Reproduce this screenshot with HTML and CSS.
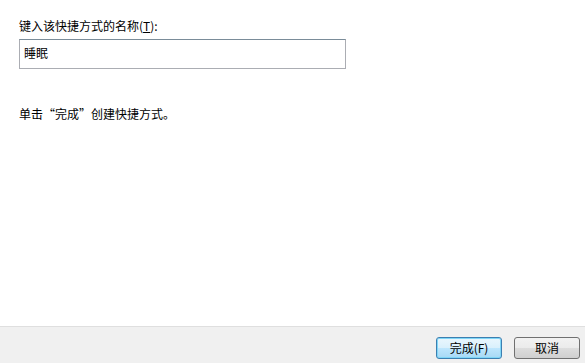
FILE: index.html
```html
<!DOCTYPE html>
<html lang="zh-CN">
  <head>
    <meta charset="UTF-8" />
    <title>创建快捷方式</title>
    <link rel="stylesheet" href="styles.css">
  </head>
  <body>
    <div class="wizard">
      <div class="wizard__body">
        <label class="wizard__label" for="name">键入该快捷方式的名称(<u>T</u>):</label>
        <input id="name" class="wizard__input" type="text" value="睡眠" />
        <p class="wizard__hint">单击“完成”创建快捷方式。</p>
      </div>
      <div class="wizard__footer">
        <button class="wizard__button wizard__button--default">完成(F)</button>
        <button class="wizard__button">取消</button>
      </div>
    </div>
  </body>
</html>
```

FILE: styles.css
```css
* {
  padding: 0;
  margin: 0;
  box-sizing: border-box;
}

body {
  background-color: #ffffff;
  font-family: "Noto Sans CJK SC", "Liberation Sans", sans-serif;
  font-size: 12px;
  color: #000000;
}

.wizard {
  width: 585px;
  height: 363px;
  display: flex;
  flex-direction: column;
}

.wizard__body {
  flex: 1;
  display: flex;
  flex-direction: column;
  align-items: flex-start;
  padding: 18px 0 0 19px;
}

.wizard__label {
  line-height: 16px;
  height: 16px;
}

.wizard__input {
  margin-top: 5px;
  width: 327px;
  height: 30px;
  border: 1px solid #abadb3;
  border-top-color: #7a8c99;
  padding: 0 4px 4px;
  font-family: inherit;
  font-size: 12px;
  color: #000000;
  outline: none;
}

.wizard__hint {
  margin-top: 37px;
  line-height: 16px;
}

.wizard__footer {
  height: 37px;
  background-color: #f0f0f0;
  border-top: 1px solid #dfdfdf;
  display: flex;
  justify-content: flex-end;
  align-items: center;
  gap: 12px;
  padding: 5px 5px 0 0;
}

.wizard__button {
  width: 66px;
  height: 22px;
  border: 1px solid #707070;
  border-radius: 3px;
  background: linear-gradient(#f2f2f2 0%, #ebebeb 50%, #dddddd 51%, #cfcfcf 100%);
  font-family: inherit;
  font-size: 12px;
  color: #000000;
}

.wizard__button--default {
  border-color: #3c7fb1;
  box-shadow: inset 0 0 0 1px #7fd6f7;
  background: linear-gradient(#eaf6fd 0%, #d9f0fc 50%, #bee6fd 51%, #a7d9f5 100%);
}
```
